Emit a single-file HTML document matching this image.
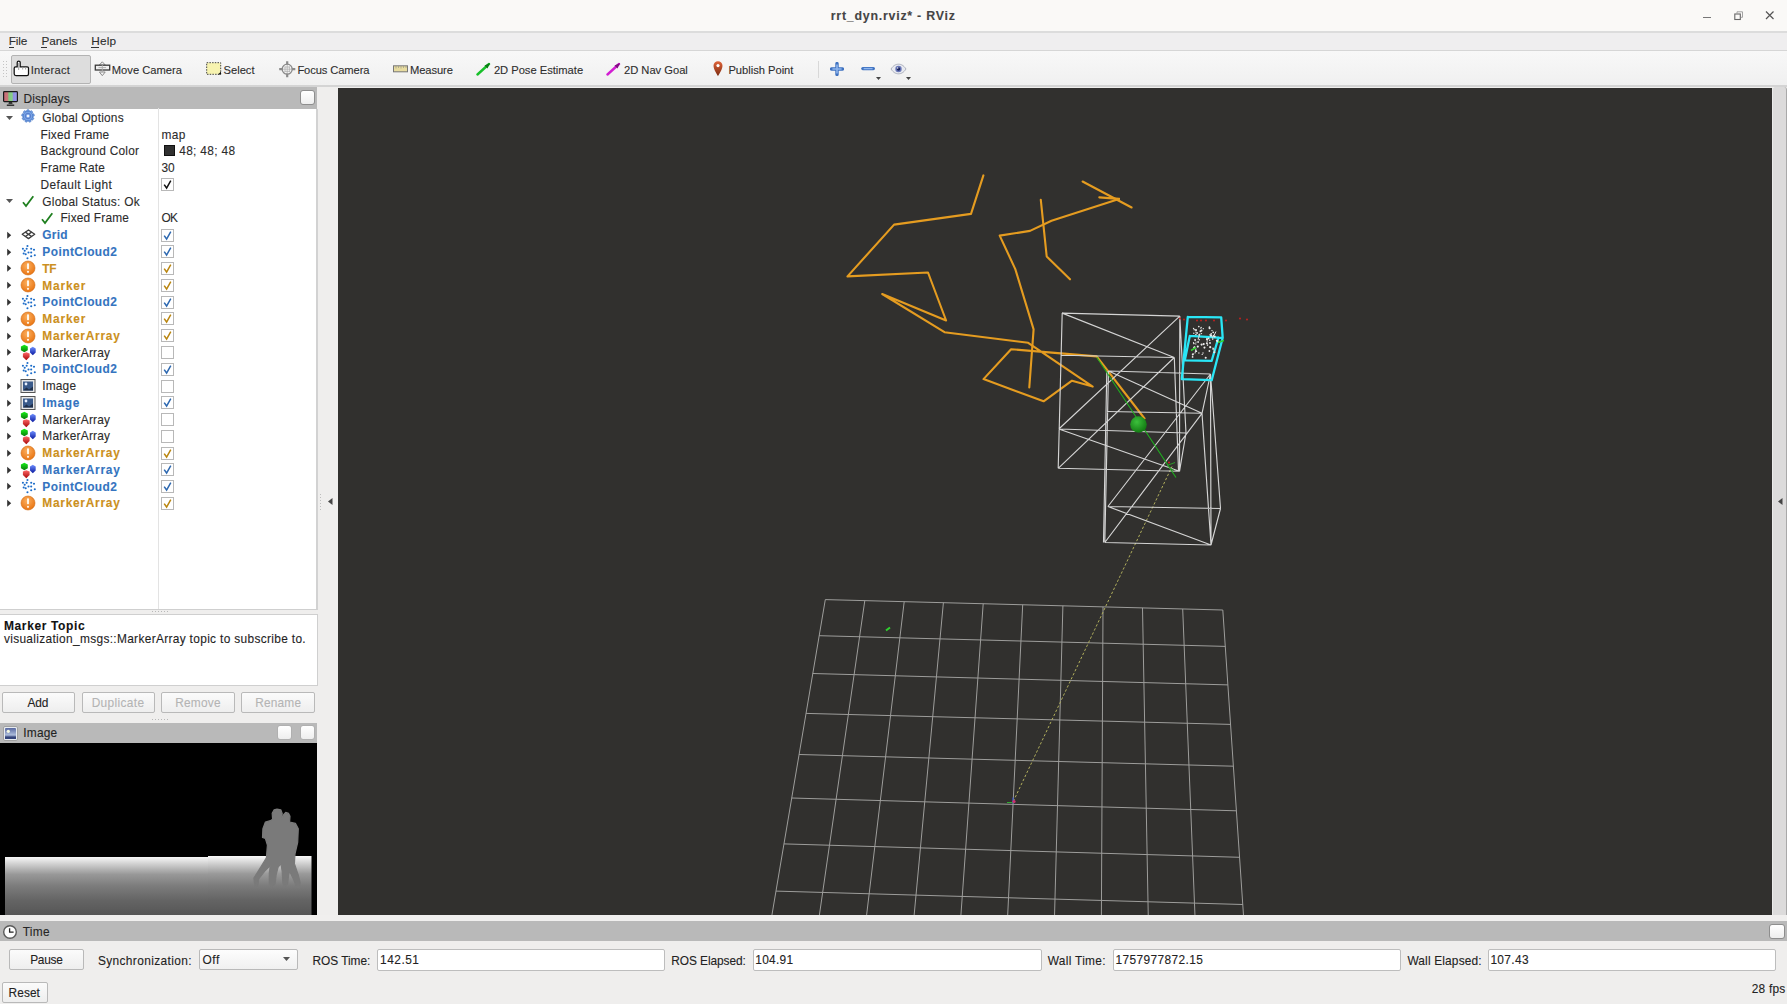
<!DOCTYPE html>
<html><head><meta charset="utf-8"><title>RViz</title><style>
*{margin:0;padding:0;box-sizing:border-box}
html,body{width:1787px;height:1004px;overflow:hidden;background:#efeeed;font-family:"Liberation Sans",sans-serif}
.a{position:absolute}
.t{position:absolute;white-space:pre;line-height:1;font-family:"Liberation Sans",sans-serif;-webkit-text-stroke:0.1px currentColor}
.btn{position:absolute;border:1px solid #b9b9b9;border-radius:2px;background:linear-gradient(#fbfbfb,#eeeeee)}
.inp{position:absolute;border:1px solid #bdbdbd;border-radius:2px;background:#fff}
.cb{position:absolute;width:13px;height:13px;border:1px solid #b8b8b8;background:#fff}
.hb{position:absolute;width:15px;height:15px;border:1px solid #8e8e8e;border-radius:3px;background:linear-gradient(#ffffff,#eeeeee)}
</style></head>
<body>
<div class="a" style="left:0;top:0;width:1787px;height:31px;background:#faf9f7"></div>
<div class="a" style="left:0;top:31px;width:1787px;height:2px;background:#dcdcdc"></div>
<div class="a" style="left:1703px;top:16.5px;width:8px;height:1.2px;background:#777"></div>
<svg class="a" style="left:1733px;top:10px" width="12" height="12" viewBox="0 0 12 12"><rect x="1.8" y="4" width="5.5" height="5.5" fill="none" stroke="#666" stroke-width="1.1"/><path d="M4 3.5V1.8h5.5v5.5H7.8" fill="none" stroke="#999" stroke-width="0.9"/></svg>
<svg class="a" style="left:1764px;top:10px" width="12" height="12" viewBox="0 0 12 12"><path d="M2 1.5L9.5 9M9.5 1.5L2 9" stroke="#555" stroke-width="1.2"/></svg>
<div class="a" style="left:0;top:33px;width:1787px;height:17px;background:#efeeef"></div>
<div class="a" style="left:0;top:50px;width:1787px;height:1px;background:#d6d6d6"></div>
<div class="a" style="left:8.5px;top:47px;width:5.5px;height:1px;background:#333"></div>
<div class="a" style="left:41.3px;top:47px;width:6px;height:1px;background:#333"></div>
<div class="a" style="left:91.2px;top:47px;width:7.5px;height:1px;background:#333"></div>
<div class="a" style="left:0;top:51px;width:1787px;height:34px;background:linear-gradient(#f8f8f8,#f0f0f0)"></div>
<div class="a" style="left:0;top:85px;width:1787px;height:2px;background:#d4d4d4"></div>
<svg class="a" style="left:3px;top:61px" width="5" height="18"><rect x="0" y="0" width="1" height="1" fill="#c4c4c4"/><rect x="0" y="3" width="1" height="1" fill="#c4c4c4"/><rect x="0" y="6" width="1" height="1" fill="#c4c4c4"/><rect x="0" y="9" width="1" height="1" fill="#c4c4c4"/><rect x="0" y="12" width="1" height="1" fill="#c4c4c4"/><rect x="0" y="15" width="1" height="1" fill="#c4c4c4"/><rect x="3" y="0" width="1" height="1" fill="#c4c4c4"/><rect x="3" y="3" width="1" height="1" fill="#c4c4c4"/><rect x="3" y="6" width="1" height="1" fill="#c4c4c4"/><rect x="3" y="9" width="1" height="1" fill="#c4c4c4"/><rect x="3" y="12" width="1" height="1" fill="#c4c4c4"/><rect x="3" y="15" width="1" height="1" fill="#c4c4c4"/></svg>
<div class="a" style="left:11px;top:55px;width:80px;height:29px;border:1px solid #b3b3b3;border-radius:2px;background:#dddddd"></div>
<svg class="a" style="left:13px;top:60px" width="17" height="17" viewBox="0 0 17 17"><path d="M2.6 6.8H4.2V2.6a1.5 1.5 0 0 1 3 0V6.8H14.2a1.3 1.3 0 0 1 1.3 1.3V14a1.6 1.6 0 0 1-1.6 1.6H3a1.8 1.8 0 0 1-1.8-1.8V8.2a1.4 1.4 0 0 1 1.4-1.4z" fill="#fff" stroke="#111" stroke-width="1.25"/><path d="M5.7 3v7M9.7 7v2.5M12.6 7v2.5" stroke="#999" stroke-width="0.9"/></svg>
<svg class="a" style="left:94px;top:61px" width="17" height="16" viewBox="0 0 17 16"><path d="M8.3 0.8L5.2 4.2h6.2z M8.3 14.7L5.4 11h5.8z" fill="#f4f4f4" stroke="#8a8a8a" stroke-width="1"/><rect x="1.3" y="4.2" width="14.4" height="4.8" fill="#f0f0f0" stroke="#3a3a3a" stroke-width="1.3"/><path d="M8.3 4v7M4.5 6.6h7.6" stroke="#aaa" stroke-width="0.9"/></svg>
<svg class="a" style="left:206px;top:62px" width="16" height="14" viewBox="0 0 16 14"><rect x="0.7" y="0.7" width="14" height="11.6" fill="#f7f3b0" stroke="#444" stroke-width="1" stroke-dasharray="1.5 1.2"/><path d="M12 12.5L15 12.5 15 9.5z" fill="#111"/></svg>
<svg class="a" style="left:279px;top:61px" width="17" height="17" viewBox="0 0 17 17"><g fill="none" stroke="#8a8a8a"><circle cx="8.2" cy="8.2" r="5" stroke-width="1.3"/><path d="M8.2 0.3v3.5M8.2 12.6v3.6M0.2 8.2h3.5M12.7 8.2h3.6" stroke-width="2.2"/><path d="M8.2 4v8.4M4 8.2h8.4M5.5 6h5.4M5.5 10.4h5.4M6 5.5v5.4M10.4 5.5v5.4" stroke-width="0.7" stroke="#aaa"/></g></svg>
<svg class="a" style="left:393px;top:65px" width="15" height="8" viewBox="0 0 15 8"><rect x="0.5" y="0.8" width="14" height="6" fill="#e8dca0" stroke="#777" stroke-width="1"/><path d="M3 1v2.5M5.5 1v2M8 1v2.5M10.5 1v2M13 1v2" stroke="#998" stroke-width="0.7"/></svg>
<svg class="a" style="left:476px;top:62px" width="15" height="14" viewBox="0 0 15 14"><path d="M1.5 12.5L13 2" stroke="#18c02a" stroke-width="2.4" stroke-linecap="round"/><path d="M14 1L8.5 3.5 11.5 6.5z" fill="#0a7a15"/></svg>
<svg class="a" style="left:606px;top:62px" width="15" height="14" viewBox="0 0 15 14"><path d="M1.5 12.5L13 2" stroke="#d21ed2" stroke-width="2.4" stroke-linecap="round"/><path d="M14 1L8.5 3.5 11.5 6.5z" fill="#801080"/></svg>
<svg class="a" style="left:712px;top:60px" width="12" height="17" viewBox="0 0 12 17"><defs><linearGradient id="pin" x1="0" y1="0" x2="0" y2="1"><stop offset="0" stop-color="#e0643a"/><stop offset="1" stop-color="#7a2a10"/></linearGradient></defs><path d="M6 16.2C6 16.2 1.5 9.5 1.5 5.8a4.5 4.5 0 0 1 9 0c0 3.7-4.5 10.4-4.5 10.4z" fill="url(#pin)"/><circle cx="6" cy="5.6" r="1.6" fill="#fff"/></svg>
<div class="a" style="left:818px;top:60.5px;width:1px;height:17px;background:#d8d8d8"></div>
<svg class="a" style="left:830px;top:62px" width="14" height="14" viewBox="0 0 14 14"><path d="M7 1.6v10.8M1.6 7h10.8" stroke="#3f72c0" stroke-width="3.4" stroke-linecap="round"/><path d="M7 2.4v9.2M2.4 7h9.2" stroke="#8fb6ee" stroke-width="1.6"/></svg>
<svg class="a" style="left:861px;top:62px" width="14" height="14" viewBox="0 0 14 14"><path d="M1.8 6.6h10.6" stroke="#3f72c0" stroke-width="3.2" stroke-linecap="round"/><path d="M2.6 6.6h9" stroke="#8fb6ee" stroke-width="1.4"/></svg>
<svg class="a" style="left:875.5px;top:77px" width="6" height="4"><path d="M0 0h5l-2.5 3z" fill="#444"/></svg>
<svg class="a" style="left:890px;top:63px" width="17" height="12" viewBox="0 0 17 12"><path d="M1 6C3.5 2.2 6 1.2 8.5 1.2S13.5 2.2 16 6C13.5 9.8 11 10.8 8.5 10.8S3.5 9.8 1 6z" fill="#e8eaf0" stroke="#9aa0b0" stroke-width="0.8"/><circle cx="8.5" cy="6" r="3.2" fill="#6a78b8"/><circle cx="8.5" cy="6" r="1.8" fill="#1a2460"/><circle cx="7.7" cy="5" r="0.7" fill="#fff"/></svg>
<svg class="a" style="left:905.5px;top:77px" width="6" height="4"><path d="M0 0h5l-2.5 3z" fill="#444"/></svg>
<div class="a" style="left:0;top:87px;width:317px;height:21.5px;background:#b9b9b9"></div>
<svg class="a" style="left:2px;top:90px" width="17" height="17" viewBox="0 0 17 17"><defs><linearGradient id="scr" x1="0" x2="1"><stop offset="0" stop-color="#c86a78"/><stop offset="0.3" stop-color="#c87878"/><stop offset="0.38" stop-color="#80c880"/><stop offset="0.62" stop-color="#88d088"/><stop offset="0.7" stop-color="#9090e0"/><stop offset="1" stop-color="#9a9af0"/></linearGradient></defs><rect x="1.6" y="1.6" width="13.8" height="10" rx="0.8" fill="url(#scr)" stroke="#1a1a1a" stroke-width="1.2"/><path d="M7 12.2h3l0.6 1.6h-4.2z" fill="#111"/><path d="M4.8 15.2h7.4" stroke="#1a1a1a" stroke-width="1.3"/></svg>
<div class="hb" style="left:299.5px;top:89.5px;width:15.5px;height:15.2px"></div>
<div class="a" style="left:0;top:108.5px;width:318px;height:501px;background:#fff;border-right:2px solid #d2d2d2;border-bottom:1px solid #cfcfcf"></div>
<div class="a" style="left:158px;top:108px;width:1px;height:501px;background:#e3e3e3"></div>
<svg class="a" style="left:5px;top:114.6px" width="9" height="6"><path d="M1 1h7L4.5 5z" fill="#555"/></svg>
<svg class="a" style="left:20.9px;top:109.3px" width="14" height="14" viewBox="0 0 16 16"><g fill="#7aa5e6" stroke="#3f70c0" stroke-width="0.7"><rect x="6.6" y="0.9" width="2.8" height="3.2" rx="0.6" transform="rotate(0 8 8)"/><rect x="6.6" y="0.9" width="2.8" height="3.2" rx="0.6" transform="rotate(40 8 8)"/><rect x="6.6" y="0.9" width="2.8" height="3.2" rx="0.6" transform="rotate(80 8 8)"/><rect x="6.6" y="0.9" width="2.8" height="3.2" rx="0.6" transform="rotate(120 8 8)"/><rect x="6.6" y="0.9" width="2.8" height="3.2" rx="0.6" transform="rotate(160 8 8)"/><rect x="6.6" y="0.9" width="2.8" height="3.2" rx="0.6" transform="rotate(200 8 8)"/><rect x="6.6" y="0.9" width="2.8" height="3.2" rx="0.6" transform="rotate(240 8 8)"/><rect x="6.6" y="0.9" width="2.8" height="3.2" rx="0.6" transform="rotate(280 8 8)"/><rect x="6.6" y="0.9" width="2.8" height="3.2" rx="0.6" transform="rotate(320 8 8)"/><circle cx="8" cy="8" r="5.3"/></g><g fill="#7aa5e6"><circle cx="8" cy="8" r="4.9"/></g><circle cx="8" cy="8" r="3.1" fill="none" stroke="#5578c8" stroke-width="1"/><circle cx="8" cy="8" r="1.5" fill="#eef2ff"/></svg>
<div class="a" style="left:164px;top:144.8px;width:11px;height:11px;background:#303030;border:1px solid #111"></div>
<div class="cb" style="left:161px;top:178.3px"></div>
<svg class="a" style="left:162px;top:179.3px" width="11" height="11" viewBox="0 0 11 11"><path d="M2.2 5.6L4.6 9 8.8 1.6" fill="none" stroke="#111" stroke-width="1.5"/></svg>
<svg class="a" style="left:5px;top:198.4px" width="9" height="6"><path d="M1 1h7L4.5 5z" fill="#555"/></svg>
<svg class="a" style="left:20.3px;top:193.4px" width="16" height="16" viewBox="0 0 16 16"><path d="M3 9.3L6 13 13.3 3.3" fill="none" stroke="#1f7f1f" stroke-width="1.8"/></svg>
<svg class="a" style="left:39.2px;top:210.2px" width="16" height="16" viewBox="0 0 16 16"><path d="M3 9.3L6 13 13.3 3.3" fill="none" stroke="#1f7f1f" stroke-width="1.8"/></svg>
<svg class="a" style="left:6px;top:230.9px" width="7" height="9"><path d="M1.2 0.8v7L5.2 4.3z" fill="#333"/></svg>
<svg class="a" style="left:20.3px;top:226.9px" width="17" height="16" viewBox="0 0 17 16"><g fill="none" stroke="#3c3c3c" stroke-width="1.3" stroke-linejoin="round"><path d="M8.5 3L14.7 7.3 8.5 11.6 2.2 7.3z"/><path d="M5.4 5.1L11.6 9.5M11.6 5.1L5.4 9.5"/></g></svg>
<div class="cb" style="left:161px;top:228.6px"></div>
<svg class="a" style="left:162px;top:229.6px" width="11" height="11" viewBox="0 0 11 11"><path d="M2.2 5.6L4.6 9 8.8 1.6" fill="none" stroke="#2d68b0" stroke-width="1.5"/></svg>
<svg class="a" style="left:6px;top:247.7px" width="7" height="9"><path d="M1.2 0.8v7L5.2 4.3z" fill="#333"/></svg>
<svg class="a" style="left:20.3px;top:243.7px" width="17" height="17" viewBox="0 0 17 17"><circle cx="7.46" cy="2" r="1.05" fill="#1c6cc8"/><circle cx="2.9" cy="4.8" r="1.05" fill="#1c6cc8"/><circle cx="6.66" cy="4.8" r="1.05" fill="#1c6cc8"/><circle cx="11.2" cy="4.8" r="1.05" fill="#1c6cc8"/><circle cx="14" cy="5.8" r="1.05" fill="#1c6cc8"/><circle cx="4.7" cy="6.7" r="1.05" fill="#1c6cc8"/><circle cx="8.5" cy="8.5" r="1.05" fill="#1c6cc8"/><circle cx="11.2" cy="8.5" r="1.05" fill="#1c6cc8"/><circle cx="3.7" cy="9.5" r="1.05" fill="#1c6cc8"/><circle cx="5.7" cy="10.3" r="1.05" fill="#1c6cc8"/><circle cx="14.8" cy="11.3" r="1.05" fill="#1c6cc8"/><circle cx="11.2" cy="12.3" r="1.05" fill="#1c6cc8"/><circle cx="7.46" cy="14.2" r="1.05" fill="#1c6cc8"/></svg>
<div class="cb" style="left:161px;top:245.4px"></div>
<svg class="a" style="left:162px;top:246.4px" width="11" height="11" viewBox="0 0 11 11"><path d="M2.2 5.6L4.6 9 8.8 1.6" fill="none" stroke="#2d68b0" stroke-width="1.5"/></svg>
<svg class="a" style="left:6px;top:264.4px" width="7" height="9"><path d="M1.2 0.8v7L5.2 4.3z" fill="#333"/></svg>
<svg class="a" style="left:20.3px;top:260.4px" width="16" height="16" viewBox="0 0 16 16"><defs><radialGradient id="wg268" cx="0.45" cy="0.35" r="0.7"><stop offset="0" stop-color="#fbb060"/><stop offset="1" stop-color="#e8700c"/></radialGradient></defs><circle cx="8" cy="8" r="7" fill="url(#wg268)" stroke="#d06a10" stroke-width="0.6"/><rect x="7" y="3.2" width="2" height="6" rx="0.8" fill="#fff6e8"/><circle cx="8" cy="11.8" r="1.1" fill="#fff6e8"/></svg>
<div class="cb" style="left:161px;top:262.1px"></div>
<svg class="a" style="left:162px;top:263.1px" width="11" height="11" viewBox="0 0 11 11"><path d="M2.2 5.6L4.6 9 8.8 1.6" fill="none" stroke="#b98510" stroke-width="1.5"/></svg>
<svg class="a" style="left:6px;top:281.2px" width="7" height="9"><path d="M1.2 0.8v7L5.2 4.3z" fill="#333"/></svg>
<svg class="a" style="left:20.3px;top:277.2px" width="16" height="16" viewBox="0 0 16 16"><defs><radialGradient id="wg285" cx="0.45" cy="0.35" r="0.7"><stop offset="0" stop-color="#fbb060"/><stop offset="1" stop-color="#e8700c"/></radialGradient></defs><circle cx="8" cy="8" r="7" fill="url(#wg285)" stroke="#d06a10" stroke-width="0.6"/><rect x="7" y="3.2" width="2" height="6" rx="0.8" fill="#fff6e8"/><circle cx="8" cy="11.8" r="1.1" fill="#fff6e8"/></svg>
<div class="cb" style="left:161px;top:278.9px"></div>
<svg class="a" style="left:162px;top:279.9px" width="11" height="11" viewBox="0 0 11 11"><path d="M2.2 5.6L4.6 9 8.8 1.6" fill="none" stroke="#b98510" stroke-width="1.5"/></svg>
<svg class="a" style="left:6px;top:298.0px" width="7" height="9"><path d="M1.2 0.8v7L5.2 4.3z" fill="#333"/></svg>
<svg class="a" style="left:20.3px;top:294.0px" width="17" height="17" viewBox="0 0 17 17"><circle cx="7.46" cy="2" r="1.05" fill="#1c6cc8"/><circle cx="2.9" cy="4.8" r="1.05" fill="#1c6cc8"/><circle cx="6.66" cy="4.8" r="1.05" fill="#1c6cc8"/><circle cx="11.2" cy="4.8" r="1.05" fill="#1c6cc8"/><circle cx="14" cy="5.8" r="1.05" fill="#1c6cc8"/><circle cx="4.7" cy="6.7" r="1.05" fill="#1c6cc8"/><circle cx="8.5" cy="8.5" r="1.05" fill="#1c6cc8"/><circle cx="11.2" cy="8.5" r="1.05" fill="#1c6cc8"/><circle cx="3.7" cy="9.5" r="1.05" fill="#1c6cc8"/><circle cx="5.7" cy="10.3" r="1.05" fill="#1c6cc8"/><circle cx="14.8" cy="11.3" r="1.05" fill="#1c6cc8"/><circle cx="11.2" cy="12.3" r="1.05" fill="#1c6cc8"/><circle cx="7.46" cy="14.2" r="1.05" fill="#1c6cc8"/></svg>
<div class="cb" style="left:161px;top:295.7px"></div>
<svg class="a" style="left:162px;top:296.7px" width="11" height="11" viewBox="0 0 11 11"><path d="M2.2 5.6L4.6 9 8.8 1.6" fill="none" stroke="#2d68b0" stroke-width="1.5"/></svg>
<svg class="a" style="left:6px;top:314.7px" width="7" height="9"><path d="M1.2 0.8v7L5.2 4.3z" fill="#333"/></svg>
<svg class="a" style="left:20.3px;top:310.7px" width="16" height="16" viewBox="0 0 16 16"><defs><radialGradient id="wg319" cx="0.45" cy="0.35" r="0.7"><stop offset="0" stop-color="#fbb060"/><stop offset="1" stop-color="#e8700c"/></radialGradient></defs><circle cx="8" cy="8" r="7" fill="url(#wg319)" stroke="#d06a10" stroke-width="0.6"/><rect x="7" y="3.2" width="2" height="6" rx="0.8" fill="#fff6e8"/><circle cx="8" cy="11.8" r="1.1" fill="#fff6e8"/></svg>
<div class="cb" style="left:161px;top:312.4px"></div>
<svg class="a" style="left:162px;top:313.4px" width="11" height="11" viewBox="0 0 11 11"><path d="M2.2 5.6L4.6 9 8.8 1.6" fill="none" stroke="#b98510" stroke-width="1.5"/></svg>
<svg class="a" style="left:6px;top:331.5px" width="7" height="9"><path d="M1.2 0.8v7L5.2 4.3z" fill="#333"/></svg>
<svg class="a" style="left:20.3px;top:327.5px" width="16" height="16" viewBox="0 0 16 16"><defs><radialGradient id="wg336" cx="0.45" cy="0.35" r="0.7"><stop offset="0" stop-color="#fbb060"/><stop offset="1" stop-color="#e8700c"/></radialGradient></defs><circle cx="8" cy="8" r="7" fill="url(#wg336)" stroke="#d06a10" stroke-width="0.6"/><rect x="7" y="3.2" width="2" height="6" rx="0.8" fill="#fff6e8"/><circle cx="8" cy="11.8" r="1.1" fill="#fff6e8"/></svg>
<div class="cb" style="left:161px;top:329.2px"></div>
<svg class="a" style="left:162px;top:330.2px" width="11" height="11" viewBox="0 0 11 11"><path d="M2.2 5.6L4.6 9 8.8 1.6" fill="none" stroke="#b98510" stroke-width="1.5"/></svg>
<svg class="a" style="left:6px;top:348.2px" width="7" height="9"><path d="M1.2 0.8v7L5.2 4.3z" fill="#333"/></svg>
<svg class="a" style="left:20.3px;top:344.2px" width="17" height="17" viewBox="0 0 17 17"><defs><linearGradient id="gG" x1="0" y1="0" x2="0" y2="1"><stop offset="0" stop-color="#18f018"/><stop offset="1" stop-color="#0a7a0a"/></linearGradient><linearGradient id="gB" x1="0" y1="0" x2="0" y2="1"><stop offset="0" stop-color="#7090ff"/><stop offset="1" stop-color="#0a1aa0"/></linearGradient><linearGradient id="gR" x1="0" y1="0" x2="0" y2="1"><stop offset="0" stop-color="#ff6a6a"/><stop offset="1" stop-color="#a80808"/></linearGradient></defs><path d="M4.3 0.8L7.8 2.5 7.8 6.3 4.3 8.3 0.9 6.3 0.9 2.5z" fill="url(#gG)"/><path d="M12.8 2.8L15.7 4.6 15.7 8.6 12.8 11.2 10 8.6 10 4.6z" fill="url(#gB)"/><path d="M6.3 8.2L9.6 9.6 9.6 13 6.3 16.2 2.9 13 2.9 9.6z" fill="url(#gR)"/></svg>
<div class="cb" style="left:161px;top:345.9px"></div>
<svg class="a" style="left:6px;top:365.0px" width="7" height="9"><path d="M1.2 0.8v7L5.2 4.3z" fill="#333"/></svg>
<svg class="a" style="left:20.3px;top:361.0px" width="17" height="17" viewBox="0 0 17 17"><circle cx="7.46" cy="2" r="1.05" fill="#1c6cc8"/><circle cx="2.9" cy="4.8" r="1.05" fill="#1c6cc8"/><circle cx="6.66" cy="4.8" r="1.05" fill="#1c6cc8"/><circle cx="11.2" cy="4.8" r="1.05" fill="#1c6cc8"/><circle cx="14" cy="5.8" r="1.05" fill="#1c6cc8"/><circle cx="4.7" cy="6.7" r="1.05" fill="#1c6cc8"/><circle cx="8.5" cy="8.5" r="1.05" fill="#1c6cc8"/><circle cx="11.2" cy="8.5" r="1.05" fill="#1c6cc8"/><circle cx="3.7" cy="9.5" r="1.05" fill="#1c6cc8"/><circle cx="5.7" cy="10.3" r="1.05" fill="#1c6cc8"/><circle cx="14.8" cy="11.3" r="1.05" fill="#1c6cc8"/><circle cx="11.2" cy="12.3" r="1.05" fill="#1c6cc8"/><circle cx="7.46" cy="14.2" r="1.05" fill="#1c6cc8"/></svg>
<div class="cb" style="left:161px;top:362.7px"></div>
<svg class="a" style="left:162px;top:363.7px" width="11" height="11" viewBox="0 0 11 11"><path d="M2.2 5.6L4.6 9 8.8 1.6" fill="none" stroke="#2d68b0" stroke-width="1.5"/></svg>
<svg class="a" style="left:6px;top:381.8px" width="7" height="9"><path d="M1.2 0.8v7L5.2 4.3z" fill="#333"/></svg>
<svg class="a" style="left:20.3px;top:377.8px" width="16" height="16" viewBox="0 0 16 16"><rect x="1" y="1.5" width="14" height="13" fill="#e8e8e8" stroke="#555" stroke-width="1"/><rect x="3" y="3.5" width="10" height="9" fill="#3a5a8a"/><circle cx="6" cy="6" r="1.4" fill="#e8f0ff"/><path d="M3 12.5l3.5-3 2.5 2 4-3v4z" fill="#1f2f4a"/></svg>
<div class="cb" style="left:161px;top:379.5px"></div>
<svg class="a" style="left:6px;top:398.5px" width="7" height="9"><path d="M1.2 0.8v7L5.2 4.3z" fill="#333"/></svg>
<svg class="a" style="left:20.3px;top:394.5px" width="16" height="16" viewBox="0 0 16 16"><rect x="1" y="1.5" width="14" height="13" fill="#e8e8e8" stroke="#555" stroke-width="1"/><rect x="3" y="3.5" width="10" height="9" fill="#3a5a8a"/><circle cx="6" cy="6" r="1.4" fill="#e8f0ff"/><path d="M3 12.5l3.5-3 2.5 2 4-3v4z" fill="#1f2f4a"/></svg>
<div class="cb" style="left:161px;top:396.2px"></div>
<svg class="a" style="left:162px;top:397.2px" width="11" height="11" viewBox="0 0 11 11"><path d="M2.2 5.6L4.6 9 8.8 1.6" fill="none" stroke="#2d68b0" stroke-width="1.5"/></svg>
<svg class="a" style="left:6px;top:415.3px" width="7" height="9"><path d="M1.2 0.8v7L5.2 4.3z" fill="#333"/></svg>
<svg class="a" style="left:20.3px;top:411.3px" width="17" height="17" viewBox="0 0 17 17"><defs><linearGradient id="gG" x1="0" y1="0" x2="0" y2="1"><stop offset="0" stop-color="#18f018"/><stop offset="1" stop-color="#0a7a0a"/></linearGradient><linearGradient id="gB" x1="0" y1="0" x2="0" y2="1"><stop offset="0" stop-color="#7090ff"/><stop offset="1" stop-color="#0a1aa0"/></linearGradient><linearGradient id="gR" x1="0" y1="0" x2="0" y2="1"><stop offset="0" stop-color="#ff6a6a"/><stop offset="1" stop-color="#a80808"/></linearGradient></defs><path d="M4.3 0.8L7.8 2.5 7.8 6.3 4.3 8.3 0.9 6.3 0.9 2.5z" fill="url(#gG)"/><path d="M12.8 2.8L15.7 4.6 15.7 8.6 12.8 11.2 10 8.6 10 4.6z" fill="url(#gB)"/><path d="M6.3 8.2L9.6 9.6 9.6 13 6.3 16.2 2.9 13 2.9 9.6z" fill="url(#gR)"/></svg>
<div class="cb" style="left:161px;top:413.0px"></div>
<svg class="a" style="left:6px;top:432.0px" width="7" height="9"><path d="M1.2 0.8v7L5.2 4.3z" fill="#333"/></svg>
<svg class="a" style="left:20.3px;top:428.0px" width="17" height="17" viewBox="0 0 17 17"><defs><linearGradient id="gG" x1="0" y1="0" x2="0" y2="1"><stop offset="0" stop-color="#18f018"/><stop offset="1" stop-color="#0a7a0a"/></linearGradient><linearGradient id="gB" x1="0" y1="0" x2="0" y2="1"><stop offset="0" stop-color="#7090ff"/><stop offset="1" stop-color="#0a1aa0"/></linearGradient><linearGradient id="gR" x1="0" y1="0" x2="0" y2="1"><stop offset="0" stop-color="#ff6a6a"/><stop offset="1" stop-color="#a80808"/></linearGradient></defs><path d="M4.3 0.8L7.8 2.5 7.8 6.3 4.3 8.3 0.9 6.3 0.9 2.5z" fill="url(#gG)"/><path d="M12.8 2.8L15.7 4.6 15.7 8.6 12.8 11.2 10 8.6 10 4.6z" fill="url(#gB)"/><path d="M6.3 8.2L9.6 9.6 9.6 13 6.3 16.2 2.9 13 2.9 9.6z" fill="url(#gR)"/></svg>
<div class="cb" style="left:161px;top:429.7px"></div>
<svg class="a" style="left:6px;top:448.8px" width="7" height="9"><path d="M1.2 0.8v7L5.2 4.3z" fill="#333"/></svg>
<svg class="a" style="left:20.3px;top:444.8px" width="16" height="16" viewBox="0 0 16 16"><defs><radialGradient id="wg453" cx="0.45" cy="0.35" r="0.7"><stop offset="0" stop-color="#fbb060"/><stop offset="1" stop-color="#e8700c"/></radialGradient></defs><circle cx="8" cy="8" r="7" fill="url(#wg453)" stroke="#d06a10" stroke-width="0.6"/><rect x="7" y="3.2" width="2" height="6" rx="0.8" fill="#fff6e8"/><circle cx="8" cy="11.8" r="1.1" fill="#fff6e8"/></svg>
<div class="cb" style="left:161px;top:446.5px"></div>
<svg class="a" style="left:162px;top:447.5px" width="11" height="11" viewBox="0 0 11 11"><path d="M2.2 5.6L4.6 9 8.8 1.6" fill="none" stroke="#b98510" stroke-width="1.5"/></svg>
<svg class="a" style="left:6px;top:465.6px" width="7" height="9"><path d="M1.2 0.8v7L5.2 4.3z" fill="#333"/></svg>
<svg class="a" style="left:20.3px;top:461.6px" width="17" height="17" viewBox="0 0 17 17"><defs><linearGradient id="gG" x1="0" y1="0" x2="0" y2="1"><stop offset="0" stop-color="#18f018"/><stop offset="1" stop-color="#0a7a0a"/></linearGradient><linearGradient id="gB" x1="0" y1="0" x2="0" y2="1"><stop offset="0" stop-color="#7090ff"/><stop offset="1" stop-color="#0a1aa0"/></linearGradient><linearGradient id="gR" x1="0" y1="0" x2="0" y2="1"><stop offset="0" stop-color="#ff6a6a"/><stop offset="1" stop-color="#a80808"/></linearGradient></defs><path d="M4.3 0.8L7.8 2.5 7.8 6.3 4.3 8.3 0.9 6.3 0.9 2.5z" fill="url(#gG)"/><path d="M12.8 2.8L15.7 4.6 15.7 8.6 12.8 11.2 10 8.6 10 4.6z" fill="url(#gB)"/><path d="M6.3 8.2L9.6 9.6 9.6 13 6.3 16.2 2.9 13 2.9 9.6z" fill="url(#gR)"/></svg>
<div class="cb" style="left:161px;top:463.3px"></div>
<svg class="a" style="left:162px;top:464.3px" width="11" height="11" viewBox="0 0 11 11"><path d="M2.2 5.6L4.6 9 8.8 1.6" fill="none" stroke="#2d68b0" stroke-width="1.5"/></svg>
<svg class="a" style="left:6px;top:482.3px" width="7" height="9"><path d="M1.2 0.8v7L5.2 4.3z" fill="#333"/></svg>
<svg class="a" style="left:20.3px;top:478.3px" width="17" height="17" viewBox="0 0 17 17"><circle cx="7.46" cy="2" r="1.05" fill="#1c6cc8"/><circle cx="2.9" cy="4.8" r="1.05" fill="#1c6cc8"/><circle cx="6.66" cy="4.8" r="1.05" fill="#1c6cc8"/><circle cx="11.2" cy="4.8" r="1.05" fill="#1c6cc8"/><circle cx="14" cy="5.8" r="1.05" fill="#1c6cc8"/><circle cx="4.7" cy="6.7" r="1.05" fill="#1c6cc8"/><circle cx="8.5" cy="8.5" r="1.05" fill="#1c6cc8"/><circle cx="11.2" cy="8.5" r="1.05" fill="#1c6cc8"/><circle cx="3.7" cy="9.5" r="1.05" fill="#1c6cc8"/><circle cx="5.7" cy="10.3" r="1.05" fill="#1c6cc8"/><circle cx="14.8" cy="11.3" r="1.05" fill="#1c6cc8"/><circle cx="11.2" cy="12.3" r="1.05" fill="#1c6cc8"/><circle cx="7.46" cy="14.2" r="1.05" fill="#1c6cc8"/></svg>
<div class="cb" style="left:161px;top:480.0px"></div>
<svg class="a" style="left:162px;top:481.0px" width="11" height="11" viewBox="0 0 11 11"><path d="M2.2 5.6L4.6 9 8.8 1.6" fill="none" stroke="#2d68b0" stroke-width="1.5"/></svg>
<svg class="a" style="left:6px;top:499.1px" width="7" height="9"><path d="M1.2 0.8v7L5.2 4.3z" fill="#333"/></svg>
<svg class="a" style="left:20.3px;top:495.1px" width="16" height="16" viewBox="0 0 16 16"><defs><radialGradient id="wg503" cx="0.45" cy="0.35" r="0.7"><stop offset="0" stop-color="#fbb060"/><stop offset="1" stop-color="#e8700c"/></radialGradient></defs><circle cx="8" cy="8" r="7" fill="url(#wg503)" stroke="#d06a10" stroke-width="0.6"/><rect x="7" y="3.2" width="2" height="6" rx="0.8" fill="#fff6e8"/><circle cx="8" cy="11.8" r="1.1" fill="#fff6e8"/></svg>
<div class="cb" style="left:161px;top:496.8px"></div>
<svg class="a" style="left:162px;top:497.8px" width="11" height="11" viewBox="0 0 11 11"><path d="M2.2 5.6L4.6 9 8.8 1.6" fill="none" stroke="#b98510" stroke-width="1.5"/></svg>
<svg class="a" style="left:152px;top:611px" width="18" height="2"><rect x="0" y="0" width="1" height="1" fill="#b8b8b8"/><rect x="3" y="0" width="1" height="1" fill="#b8b8b8"/><rect x="6" y="0" width="1" height="1" fill="#b8b8b8"/><rect x="9" y="0" width="1" height="1" fill="#b8b8b8"/><rect x="12" y="0" width="1" height="1" fill="#b8b8b8"/><rect x="15" y="0" width="1" height="1" fill="#b8b8b8"/></svg>
<svg class="a" style="left:152px;top:719px" width="18" height="2"><rect x="0" y="0" width="1" height="1" fill="#b8b8b8"/><rect x="3" y="0" width="1" height="1" fill="#b8b8b8"/><rect x="6" y="0" width="1" height="1" fill="#b8b8b8"/><rect x="9" y="0" width="1" height="1" fill="#b8b8b8"/><rect x="12" y="0" width="1" height="1" fill="#b8b8b8"/><rect x="15" y="0" width="1" height="1" fill="#b8b8b8"/></svg>
<div class="a" style="left:0;top:614px;width:318px;height:72px;background:#fff;border:1px solid #cfcfcf;border-left:none"></div>
<div class="btn" style="left:1.5px;top:692px;width:73.2px;height:21px"></div>
<div class="btn" style="left:81.5px;top:692px;width:73.5px;height:21px"></div>
<div class="btn" style="left:161.4px;top:692px;width:73.7px;height:21px"></div>
<div class="btn" style="left:241.3px;top:692px;width:74.0px;height:21px"></div>
<div class="a" style="left:0;top:723px;width:317px;height:20px;background:#b9b9b9"></div>
<svg class="a" style="left:3px;top:726px" width="15" height="15" viewBox="0 0 15 15"><defs><linearGradient id="ih" x1="0" y1="0" x2="0" y2="1"><stop offset="0" stop-color="#5868a0"/><stop offset="0.6" stop-color="#a8b8d8"/><stop offset="1" stop-color="#34447a"/></linearGradient></defs><rect x="0.5" y="0.5" width="14" height="14" rx="1.5" fill="#e8ecf0" stroke="#a0a0a0" stroke-width="1"/><rect x="2" y="2" width="11" height="11" rx="1" fill="url(#ih)"/><circle cx="5.3" cy="5.3" r="1.6" fill="#f4f8e0"/><path d="M2 10.5h11v2.5H2z" fill="#34447a"/></svg>
<div class="hb" style="left:277px;top:725px;width:15px;height:15px;border-color:#b0b0b0"></div>
<div class="hb" style="left:300px;top:725px;width:15px;height:15px;border-color:#b0b0b0"></div>
<svg class="a" style="left:0;top:743px" width="317" height="172" viewBox="0 0 317 172">
<defs><linearGradient id="floor" x1="0" y1="0" x2="0" y2="1"><stop offset="0" stop-color="#f8f8f8"/><stop offset="0.12" stop-color="#d0d0d0"/><stop offset="0.3" stop-color="#989898"/><stop offset="0.5" stop-color="#7c7c7c"/><stop offset="0.75" stop-color="#646464"/><stop offset="1" stop-color="#565656"/></linearGradient><linearGradient id="floor2" x1="0" y1="0" x2="0" y2="1"><stop offset="0" stop-color="#fafafa"/><stop offset="0.12" stop-color="#d2d2d2"/><stop offset="0.3" stop-color="#9a9a9a"/><stop offset="0.5" stop-color="#7c7c7c"/><stop offset="0.75" stop-color="#646464"/><stop offset="1" stop-color="#565656"/></linearGradient></defs>
<rect width="317" height="172" fill="#000"/>
<rect x="5" y="114" width="204" height="58" fill="url(#floor)"/>
<rect x="208" y="113" width="103.5" height="59" fill="url(#floor2)"/>
<path d="M277.0 66.1 L280.9 66.9 L282.2 70.4 L281.9 74.2 L282.2 76.5 L283.8 71.3 L285.7 69.4 L288.6 70.4 L290.0 73.3 L289.6 79.0 L295.4 80.4 L298.3 85.8 L297.7 99.3 L295.0 110.9 L294.4 120.6 L298.3 132.1 L300.2 139.9 L299.2 144.7 L296.3 143.7 L293.4 136.0 L289.6 128.3 L288.6 132.1 L287.6 140.8 L284.7 143.7 L282.8 139.9 L282.2 128.3 L280.9 120.6 L278.0 124.4 L276.1 132.1 L275.1 140.8 L272.2 143.7 L269.3 140.8 L269.3 130.2 L270.3 122.5 L264.5 128.3 L258.7 136.0 L257.7 144.7 L254.8 143.7 L253.9 135.0 L260.6 124.4 L266.4 114.8 L267.4 102.2 L265.4 95.5 L262.5 94.5 L262.9 85.8 L265.4 79.0 L270.3 77.7 L272.6 76.2 L272.2 70.4 L274.1 66.9Z" fill="#7a7a7a" stroke="#7a7a7a" stroke-width="1.2" stroke-linejoin="round"/>
</svg>
<div class="a" style="left:318px;top:87px;width:20px;height:828px;background:#efeeed"></div>
<svg class="a" style="left:320px;top:494px" width="2" height="19"><rect x="0" y="0" width="1" height="1" fill="#bdbdbd"/><rect x="0" y="3" width="1" height="1" fill="#bdbdbd"/><rect x="0" y="6" width="1" height="1" fill="#bdbdbd"/><rect x="0" y="9" width="1" height="1" fill="#bdbdbd"/><rect x="0" y="12" width="1" height="1" fill="#bdbdbd"/><rect x="0" y="15" width="1" height="1" fill="#bdbdbd"/></svg>
<svg class="a" style="left:328px;top:498px" width="5" height="7"><path d="M4.5 0v7L0 3.5z" fill="#444"/></svg>
<div class="a" style="left:1772px;top:87px;width:15px;height:828px;background:#dcdbdb;border-left:1px solid #eaeaea;border-right:1px solid #a9a9a9;border-radius:3px 3px 0 0"></div>
<svg class="a" style="left:1777.5px;top:498px" width="5" height="7"><path d="M4.5 0v7L0 3.5z" fill="#444"/></svg>
<svg class="a" style="left:338px;top:87.5px" width="1434" height="827.5" viewBox="338 87.5 1434 827.5">
<rect x="338" y="87.5" width="1434" height="827.5" fill="#31302e"/>
<path d="M825.3 599.1L755.6 1011.1 M864.8 600.1L805.5 1010.8 M904.2 601.2L855.1 1010.4 M943.4 602.2L905.2 1010.1 M983.2 603.3L954.1 1009.8 M1022.7 604.3L1003.1 1009.5 M1062.9 605.3L1052.0 1009.2 M1103.0 606.4L1100.9 1008.9 M1142.5 607.4L1150.0 1008.6 M1182.7 608.5L1198.7 1008.3 M1222.8 609.5L1249.8 1008.0 M825.3 599.1L1222.8 609.5 M819.2 635.2L1225.3 645.9 M812.8 673.0L1227.9 684.4 M806.1 712.9L1230.6 723.9 M799.1 754.0L1233.4 765.7 M791.7 797.5L1236.4 810.3 M784.0 843.4L1239.6 856.8 M776.0 890.6L1242.8 904.0 M767.6 940.0L1246.1 953.0" fill="none" stroke="#9d9d9b" stroke-width="1"/>
<path d="M1013.3 800.9L1172 466" stroke="#b0ae5c" stroke-width="1" stroke-dasharray="2.5 2" fill="none"/>
<path d="M1007 802h7" stroke="#2fae2f" stroke-width="1"/><path d="M1013 797v6" stroke="#3050e0" stroke-width="1"/><circle cx="1014" cy="801" r="1.6" fill="#d03070"/>
<path d="M886 630L890 627" stroke="#30d030" stroke-width="2"/>
<polyline points="983.4,174.9 971,213.4 894.1,224.1 847.5,275.9 928,272 946.1,320 882.2,293.5 944.5,331.7 1028.2,342.3 1092.7,386.1 1072,380.2 1043.6,400.8 983.5,378.6 1011.1,348.7 1096.7,355.9 1144.5,418" stroke="#e59c20" stroke-width="2.1" fill="none" stroke-linejoin="round" stroke-linecap="round"/>
<polyline points="1040.8,199.3 1046.7,256 1070,278.8" stroke="#e59c20" stroke-width="2.1" fill="none" stroke-linejoin="round" stroke-linecap="round"/>
<polyline points="1119,198.4 1051.5,220.2 1030,230.4 999.7,235.1 1015.3,268.6 1033.6,328.9 1029.3,386.9" stroke="#e59c20" stroke-width="2.1" fill="none" stroke-linejoin="round" stroke-linecap="round"/>
<polyline points="1082.6,181 1131.6,207" stroke="#e59c20" stroke-width="2.1" fill="none" stroke-linejoin="round" stroke-linecap="round"/>
<polyline points="1099.3,196.9 1119,198.4" stroke="#e59c20" stroke-width="2.1" fill="none" stroke-linejoin="round" stroke-linecap="round"/>
<path d="M1062.2 312.6L1179.8 315.6 M1062.2 312.6L1058.2 467.8 M1058.2 467.8L1179.5 470.8 M1062.2 312.6L1174.3 357 M1061 354.8L1174.3 357 M1179.8 315.6L1058.8 428.5 M1058.8 428.5L1186 432.5 M1058.8 428.5L1179.5 470.8 M1058.2 467.8L1174.3 357 M1179.8 315.6L1186 432.5 M1186 432.5L1179.5 470.8 M1179.8 315.6L1179.5 470.8 M1174.3 357L1178.5 470 M1108.5 370.5L1210.5 373.5 M1108.5 370.5L1104.8 542 M1106.8 370.5L1103.5 542 M1104.8 542L1211 544.5 M1210.5 373.5L1211 544.5 M1210.5 373.5L1202 412.8 M1202 412.8L1211 544.5 M1210.5 373.5L1220.5 508 M1220.5 508L1211 544.5 M1107 411L1202 412.8 M1107.9 506L1220.5 508 M1108.5 370.5L1202 412.8 M1107.9 506L1210.5 373.5 M1202 412.8L1104.8 542 M1107.9 506L1211 544.5" stroke="#d4d4d4" stroke-width="1.15" fill="none"/>
<path d="M1096.8 356.8L1176 477" stroke="#1fae1f" stroke-width="1.1"/>
<defs><radialGradient id="sph" cx="0.4" cy="0.35" r="0.65"><stop offset="0" stop-color="#3cc03c"/><stop offset="1" stop-color="#137a13"/></radialGradient></defs>
<circle cx="1138.5" cy="424" r="8.3" fill="url(#sph)"/>
<path d="M1167 465l8 -3M1168 466l6 4" stroke="#2a9a2a" stroke-width="1"/><circle cx="1169" cy="462" r="1" fill="#d02020"/>
<path d="M1187.8 316.4L1221.2 316.9 M1187.8 316.4L1181.8 378.7 M1221.2 316.9L1222.7 337.3 M1189.8 335.4L1222.7 337.3 M1222.7 337.3L1211.7 379.7 M1184.8 359.8L1211.7 360.3 M1181.8 378.7L1211.7 379.7 M1189.8 335.4L1184.8 359.8 M1218.5 337L1211.7 360.3" stroke="#2ae6f6" stroke-width="2.3" fill="none" stroke-linecap="round"/>
<circle cx="1200.4" cy="330.8" r="0.93" fill="#ececec"/><circle cx="1193.9" cy="343.1" r="0.78" fill="#ececec"/><circle cx="1193.5" cy="342.2" r="0.62" fill="#ececec"/><circle cx="1203.3" cy="328.2" r="0.65" fill="#ececec"/><circle cx="1203.0" cy="352.5" r="0.66" fill="#ececec"/><circle cx="1197.8" cy="346.1" r="1.07" fill="#ececec"/><circle cx="1207.0" cy="338.7" r="1.09" fill="#ececec"/><circle cx="1193.2" cy="353.5" r="0.74" fill="#ececec"/><circle cx="1195.8" cy="329.8" r="0.75" fill="#ececec"/><circle cx="1213.2" cy="331.8" r="0.89" fill="#ececec"/><circle cx="1208.6" cy="337.9" r="0.87" fill="#ececec"/><circle cx="1193.6" cy="327.9" r="0.70" fill="#ececec"/><circle cx="1209.7" cy="339.7" r="0.76" fill="#ececec"/><circle cx="1207.2" cy="340.5" r="0.75" fill="#ececec"/><circle cx="1212.7" cy="348.4" r="0.72" fill="#ececec"/><circle cx="1206.9" cy="342.8" r="1.04" fill="#ececec"/><circle cx="1211.0" cy="335.2" r="1.09" fill="#ececec"/><circle cx="1195.1" cy="339.4" r="0.98" fill="#ececec"/><circle cx="1196.0" cy="341.6" r="0.62" fill="#ececec"/><circle cx="1209.4" cy="350.5" r="0.89" fill="#ececec"/><circle cx="1214.8" cy="336.0" r="0.95" fill="#ececec"/><circle cx="1207.5" cy="344.6" r="0.83" fill="#ececec"/><circle cx="1204.3" cy="347.3" r="0.63" fill="#ececec"/><circle cx="1210.2" cy="346.7" r="1.10" fill="#ececec"/><circle cx="1213.4" cy="335.1" r="0.79" fill="#ececec"/><circle cx="1209.4" cy="326.7" r="0.83" fill="#ececec"/><circle cx="1196.4" cy="329.7" r="0.63" fill="#ececec"/><circle cx="1212.0" cy="330.1" r="0.72" fill="#ececec"/><circle cx="1202.2" cy="353.9" r="0.64" fill="#ececec"/><circle cx="1203.7" cy="343.6" r="1.04" fill="#ececec"/><circle cx="1199.2" cy="339.3" r="0.78" fill="#ececec"/><circle cx="1195.9" cy="331.6" r="0.72" fill="#ececec"/><circle cx="1198.1" cy="341.5" r="0.89" fill="#ececec"/><circle cx="1198.8" cy="326.1" r="0.81" fill="#ececec"/><circle cx="1201.6" cy="344.1" r="1.08" fill="#ececec"/><circle cx="1210.0" cy="342.5" r="0.91" fill="#ececec"/><circle cx="1209.6" cy="327.7" r="1.05" fill="#ececec"/><circle cx="1212.7" cy="338.6" r="0.80" fill="#ececec"/><circle cx="1194.7" cy="346.3" r="0.63" fill="#ececec"/><circle cx="1193.8" cy="332.7" r="0.68" fill="#ececec"/><circle cx="1200.8" cy="327.7" r="0.60" fill="#ececec"/><circle cx="1195.9" cy="329.2" r="0.78" fill="#ececec"/><circle cx="1192.7" cy="354.0" r="0.91" fill="#ececec"/><circle cx="1195.9" cy="334.1" r="0.77" fill="#ececec"/><circle cx="1201.5" cy="329.9" r="1.02" fill="#ececec"/><circle cx="1217.8" cy="340.9" r="0.84" fill="#ececec"/><circle cx="1194.2" cy="329.3" r="0.77" fill="#ececec"/><circle cx="1198.9" cy="352.5" r="0.68" fill="#ececec"/><circle cx="1192.6" cy="356.4" r="0.86" fill="#ececec"/><circle cx="1195.8" cy="343.4" r="0.61" fill="#ececec"/><circle cx="1205.7" cy="357.3" r="1.03" fill="#ececec"/><circle cx="1210.1" cy="334.4" r="0.78" fill="#ececec"/><circle cx="1196.3" cy="350.7" r="0.87" fill="#ececec"/><circle cx="1212.3" cy="336.5" r="0.71" fill="#ececec"/><circle cx="1214.2" cy="351.8" r="1.01" fill="#ececec"/><circle cx="1211.2" cy="333.3" r="0.86" fill="#ececec"/><circle cx="1201.2" cy="326.9" r="0.61" fill="#ececec"/><circle cx="1199.3" cy="334.3" r="0.95" fill="#ececec"/><circle cx="1216.9" cy="340.3" r="1.07" fill="#ececec"/><circle cx="1201.5" cy="333.1" r="0.71" fill="#ececec"/><circle cx="1197.1" cy="332.5" r="0.91" fill="#ececec"/><circle cx="1204.5" cy="346.9" r="1.00" fill="#ececec"/><circle cx="1194.2" cy="347.1" r="1.05" fill="#ececec"/><path d="M1200 333l-2 6M1216 331l-3 6M1213 347l2 5M1196 348l-1 5" stroke="#dddddd" stroke-width="1"/>
<path d="M1191 350l5-3M1218 342l6-2" stroke="#30d030" stroke-width="1.5"/>
<circle cx="1180" cy="318" r="1" fill="#c02020"/><circle cx="1184" cy="319" r="1" fill="#c02020"/><circle cx="1197" cy="320" r="1" fill="#c02020"/><circle cx="1201" cy="320" r="1" fill="#c02020"/><circle cx="1206" cy="320" r="1" fill="#c02020"/><circle cx="1214" cy="320" r="1" fill="#c02020"/><circle cx="1226" cy="320" r="1" fill="#c02020"/><circle cx="1240" cy="318" r="1" fill="#c02020"/><circle cx="1247" cy="319" r="1" fill="#c02020"/>
</svg>
<div class="a" style="left:0;top:915px;width:1787px;height:6px;background:#f0efee"></div>
<div class="a" style="left:0;top:921px;width:1787px;height:20px;background:#b9b9b9"></div>
<svg class="a" style="left:2px;top:924.1px" width="16" height="16" viewBox="0 0 16 16"><circle cx="8" cy="8" r="6.3" fill="#fdfdfd" stroke="#5a5a5a" stroke-width="1.4"/><path d="M7.6 4.2V8.1h4" fill="none" stroke="#222" stroke-width="1.3"/></svg>
<div class="hb" style="left:1769px;top:923.5px;width:16px;height:15px"></div>
<div class="btn" style="left:9px;top:949px;width:74.5px;height:21px"></div>
<div class="btn" style="left:198.6px;top:949px;width:99px;height:21px;background:linear-gradient(#fdfdfd,#f0f0f0)"></div>
<svg class="a" style="left:283px;top:957px" width="8" height="5"><path d="M0 0h7L3.5 4z" fill="#555"/></svg>
<div class="inp" style="left:377.2px;top:949.3px;width:288.0px;height:21.3px"></div>
<div class="inp" style="left:752.5px;top:949.3px;width:289.0px;height:21.3px"></div>
<div class="inp" style="left:1112.9px;top:949.3px;width:288.2px;height:21.3px"></div>
<div class="inp" style="left:1487.7px;top:949.3px;width:288.7px;height:21.3px"></div>
<div class="btn" style="left:2px;top:981.5px;width:46px;height:21px"></div>
<span class="t" style="left:830.8px;top:10.40px;font-size:12.4px;font-weight:bold;color:#454545;letter-spacing:0.754px">rrt_dyn.rviz* - RViz</span>
<span class="t" style="left:8.7px;top:36.40px;font-size:11.8px;font-weight:normal;color:#2e2e2e;letter-spacing:-0.104px">File</span>
<span class="t" style="left:41.5px;top:36.40px;font-size:11.8px;font-weight:normal;color:#2e2e2e;letter-spacing:-0.080px">Panels</span>
<span class="t" style="left:91.3px;top:36.40px;font-size:11.8px;font-weight:normal;color:#2e2e2e;letter-spacing:0.209px">Help</span>
<span class="t" style="left:30.7px;top:64.80px;font-size:11.2px;font-weight:normal;color:#2e2e2e;letter-spacing:0.273px">Interact</span>
<span class="t" style="left:111.8px;top:64.80px;font-size:11.2px;font-weight:normal;color:#2e2e2e;letter-spacing:-0.006px">Move Camera</span>
<span class="t" style="left:223.6px;top:64.80px;font-size:11.2px;font-weight:normal;color:#2e2e2e;letter-spacing:-0.032px">Select</span>
<span class="t" style="left:297.4px;top:64.80px;font-size:11.2px;font-weight:normal;color:#2e2e2e;letter-spacing:-0.115px">Focus Camera</span>
<span class="t" style="left:410.0px;top:64.80px;font-size:11.2px;font-weight:normal;color:#2e2e2e;letter-spacing:-0.104px">Measure</span>
<span class="t" style="left:493.9px;top:64.80px;font-size:11.2px;font-weight:normal;color:#2e2e2e;letter-spacing:-0.022px">2D Pose Estimate</span>
<span class="t" style="left:624.0px;top:64.80px;font-size:11.2px;font-weight:normal;color:#2e2e2e;letter-spacing:-0.022px">2D Nav Goal</span>
<span class="t" style="left:728.4px;top:64.80px;font-size:11.2px;font-weight:normal;color:#2e2e2e;letter-spacing:-0.024px">Publish Point</span>
<span class="t" style="left:23.4px;top:93.60px;font-size:11.9px;font-weight:normal;color:#262626;letter-spacing:0.183px">Displays</span>
<span class="t" style="left:42.3px;top:112.90px;font-size:11.9px;font-weight:normal;color:#2c2c2c;letter-spacing:0.203px">Global Options</span>
<span class="t" style="left:40.6px;top:129.66px;font-size:11.9px;font-weight:normal;color:#2c2c2c;letter-spacing:0.179px">Fixed Frame</span>
<span class="t" style="left:161.6px;top:129.66px;font-size:11.9px;font-weight:normal;color:#2c2c2c;letter-spacing:0.320px">map</span>
<span class="t" style="left:40.6px;top:146.42px;font-size:11.9px;font-weight:normal;color:#2c2c2c;letter-spacing:0.213px">Background Color</span>
<span class="t" style="left:179.2px;top:146.42px;font-size:11.9px;font-weight:normal;color:#2c2c2c;letter-spacing:0.329px">48; 48; 48</span>
<span class="t" style="left:40.6px;top:163.18px;font-size:11.9px;font-weight:normal;color:#2c2c2c;letter-spacing:0.162px">Frame Rate</span>
<span class="t" style="left:161.6px;top:163.18px;font-size:11.9px;font-weight:normal;color:#2c2c2c;letter-spacing:-0.167px">30</span>
<span class="t" style="left:40.6px;top:179.94px;font-size:11.9px;font-weight:normal;color:#2c2c2c;letter-spacing:0.372px">Default Light</span>
<span class="t" style="left:42.3px;top:196.70px;font-size:11.9px;font-weight:normal;color:#2c2c2c;letter-spacing:0.260px">Global Status: Ok</span>
<span class="t" style="left:60.4px;top:213.46px;font-size:11.9px;font-weight:normal;color:#2c2c2c;letter-spacing:0.179px">Fixed Frame</span>
<span class="t" style="left:161.6px;top:213.46px;font-size:11.9px;font-weight:normal;color:#2c2c2c;letter-spacing:-0.744px">OK</span>
<span class="t" style="left:42.3px;top:230.22px;font-size:11.9px;font-weight:bold;color:#3474c0;letter-spacing:0.237px">Grid</span>
<span class="t" style="left:42.3px;top:246.98px;font-size:11.9px;font-weight:bold;color:#3474c0;letter-spacing:0.462px">PointCloud2</span>
<span class="t" style="left:42.3px;top:263.74px;font-size:11.9px;font-weight:bold;color:#cc9020;letter-spacing:-0.216px">TF</span>
<span class="t" style="left:42.3px;top:280.50px;font-size:11.9px;font-weight:bold;color:#cc9020;letter-spacing:0.817px">Marker</span>
<span class="t" style="left:42.3px;top:297.26px;font-size:11.9px;font-weight:bold;color:#3474c0;letter-spacing:0.462px">PointCloud2</span>
<span class="t" style="left:42.3px;top:314.02px;font-size:11.9px;font-weight:bold;color:#cc9020;letter-spacing:0.817px">Marker</span>
<span class="t" style="left:42.3px;top:330.78px;font-size:11.9px;font-weight:bold;color:#cc9020;letter-spacing:0.738px">MarkerArray</span>
<span class="t" style="left:42.3px;top:347.54px;font-size:11.9px;font-weight:normal;color:#2c2c2c;letter-spacing:0.236px">MarkerArray</span>
<span class="t" style="left:42.3px;top:364.30px;font-size:11.9px;font-weight:bold;color:#3474c0;letter-spacing:0.462px">PointCloud2</span>
<span class="t" style="left:42.3px;top:381.06px;font-size:11.9px;font-weight:normal;color:#2c2c2c;letter-spacing:0.167px">Image</span>
<span class="t" style="left:42.3px;top:397.82px;font-size:11.9px;font-weight:bold;color:#3474c0;letter-spacing:0.645px">Image</span>
<span class="t" style="left:42.3px;top:414.58px;font-size:11.9px;font-weight:normal;color:#2c2c2c;letter-spacing:0.236px">MarkerArray</span>
<span class="t" style="left:42.3px;top:431.34px;font-size:11.9px;font-weight:normal;color:#2c2c2c;letter-spacing:0.236px">MarkerArray</span>
<span class="t" style="left:42.3px;top:448.10px;font-size:11.9px;font-weight:bold;color:#cc9020;letter-spacing:0.738px">MarkerArray</span>
<span class="t" style="left:42.3px;top:464.86px;font-size:11.9px;font-weight:bold;color:#3474c0;letter-spacing:0.738px">MarkerArray</span>
<span class="t" style="left:42.3px;top:481.62px;font-size:11.9px;font-weight:bold;color:#3474c0;letter-spacing:0.462px">PointCloud2</span>
<span class="t" style="left:42.3px;top:498.38px;font-size:11.9px;font-weight:bold;color:#cc9020;letter-spacing:0.738px">MarkerArray</span>
<span class="t" style="left:3.9px;top:619.80px;font-size:12px;font-weight:bold;color:#111;letter-spacing:0.632px">Marker Topic</span>
<span class="t" style="left:3.9px;top:633.50px;font-size:11.9px;font-weight:normal;color:#1e1e1e;letter-spacing:0.332px">visualization_msgs::MarkerArray topic to subscribe to.</span>
<span class="t" style="left:27.6px;top:697.80px;font-size:11.9px;font-weight:normal;color:#222;letter-spacing:-0.157px">Add</span>
<span class="t" style="left:91.7px;top:697.80px;font-size:11.9px;font-weight:normal;color:#b4b4b4;letter-spacing:0.347px">Duplicate</span>
<span class="t" style="left:175.3px;top:697.80px;font-size:11.9px;font-weight:normal;color:#b4b4b4;letter-spacing:0.186px">Remove</span>
<span class="t" style="left:255.2px;top:697.80px;font-size:11.9px;font-weight:normal;color:#b4b4b4;letter-spacing:0.174px">Rename</span>
<span class="t" style="left:23.2px;top:728.30px;font-size:11.9px;font-weight:normal;color:#222;letter-spacing:0.247px">Image</span>
<span class="t" style="left:22.7px;top:926.50px;font-size:11.9px;font-weight:normal;color:#262626;letter-spacing:0.354px">Time</span>
<span class="t" style="left:30.2px;top:955.30px;font-size:11.9px;font-weight:normal;color:#222;letter-spacing:-0.244px">Pause</span>
<span class="t" style="left:97.9px;top:955.80px;font-size:11.9px;font-weight:normal;color:#222;letter-spacing:0.380px">Synchronization:</span>
<span class="t" style="left:202.5px;top:955.30px;font-size:11.9px;font-weight:normal;color:#222;letter-spacing:0.615px">Off</span>
<span class="t" style="left:312.6px;top:955.80px;font-size:11.9px;font-weight:normal;color:#222;letter-spacing:-0.060px">ROS Time:</span>
<span class="t" style="left:380.0px;top:955.30px;font-size:11.9px;font-weight:normal;color:#222;letter-spacing:0.521px">142.51</span>
<span class="t" style="left:671.3px;top:955.80px;font-size:11.9px;font-weight:normal;color:#222;letter-spacing:-0.072px">ROS Elapsed:</span>
<span class="t" style="left:755.3px;top:955.30px;font-size:11.9px;font-weight:normal;color:#222;letter-spacing:0.271px">104.91</span>
<span class="t" style="left:1047.7px;top:955.80px;font-size:11.9px;font-weight:normal;color:#222;letter-spacing:0.314px">Wall Time:</span>
<span class="t" style="left:1115.6px;top:955.30px;font-size:11.9px;font-weight:normal;color:#222;letter-spacing:0.387px">1757977872.15</span>
<span class="t" style="left:1407.4px;top:955.80px;font-size:11.9px;font-weight:normal;color:#222;letter-spacing:0.164px">Wall Elapsed:</span>
<span class="t" style="left:1490.4px;top:955.30px;font-size:11.9px;font-weight:normal;color:#222;letter-spacing:0.371px">107.43</span>
<span class="t" style="left:8.6px;top:988.00px;font-size:11.9px;font-weight:normal;color:#222;letter-spacing:0.067px">Reset</span>
<span class="t" style="left:1751.7px;top:984.00px;font-size:11.9px;font-weight:normal;color:#222;letter-spacing:0.232px">28 fps</span>
</body></html>
